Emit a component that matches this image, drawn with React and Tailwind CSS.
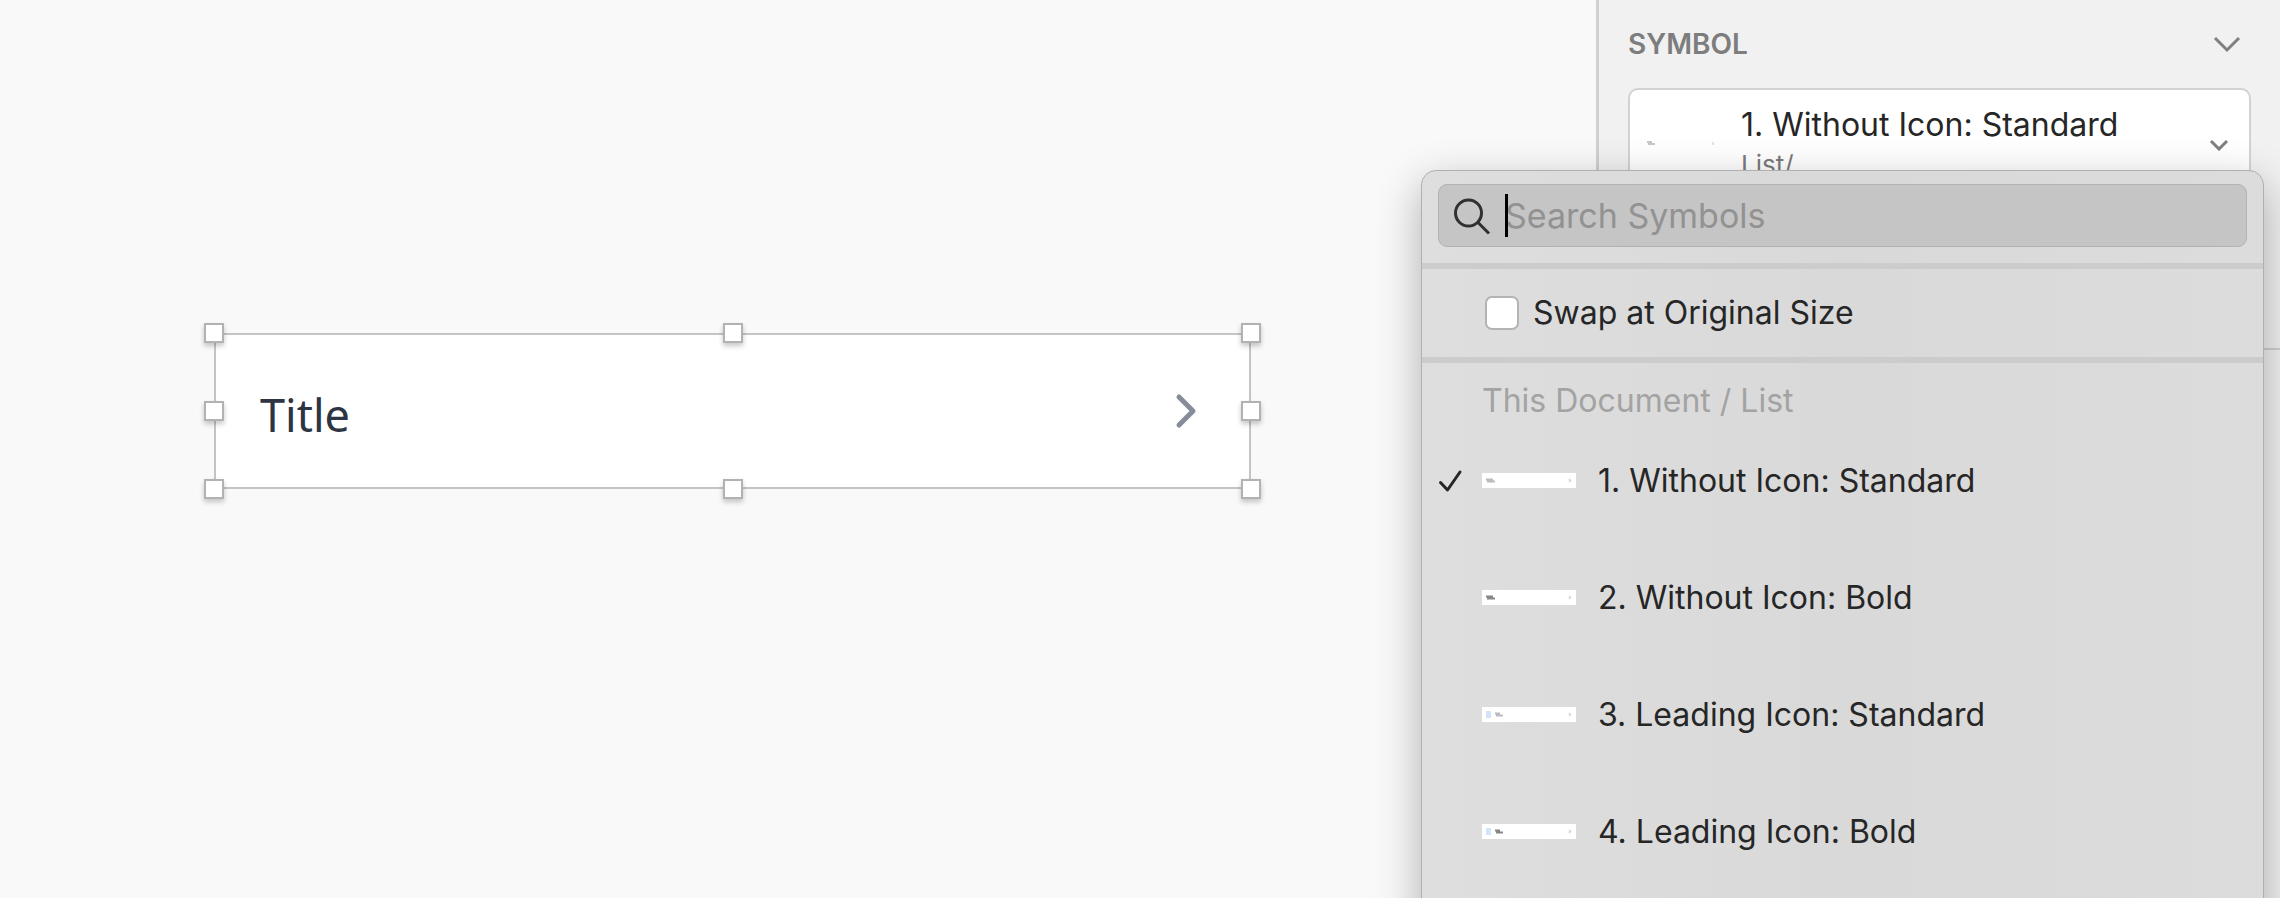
import React, { useState } from 'react';

const SYMBOLS = [
  { id: 1, name: '1. Without Icon: Standard', leading: false, bold: false },
  { id: 2, name: '2. Without Icon: Bold', leading: false, bold: true },
  { id: 3, name: '3. Leading Icon: Standard', leading: true, bold: false },
  { id: 4, name: '4. Leading Icon: Bold', leading: true, bold: true },
];

// Resize handles around the selected layer
const HANDLES = [
  'left-0 top-0',
  'left-1/2 top-0',
  'left-full top-0',
  'left-0 top-1/2',
  'left-full top-1/2',
  'left-0 top-full',
  'left-1/2 top-full',
  'left-full top-full',
];

const Thumbnail = ({ leading, bold }) => (
  <svg viewBox="0 0 94 15" className="w-[94px] h-[15px] shrink-0 bg-white" aria-hidden="true">
    {leading && <rect x="4" y="4" width="5" height="7" fill="#d3e3fa" />}
    <path
      d={leading ? 'M13 6.5h5M14 8.5h7' : 'M4 6.5h7M5 8.5h8'}
      stroke={bold ? '#85878c' : '#b9bbc0'}
      strokeWidth="2"
    />
    <path d="M87 6l1.5 1.5L87 9" fill="none" stroke="#d2d4d8" strokeWidth="1.5" />
  </svg>
);

const Canvas = () => (
  <main className="flex-1 min-w-0 bg-[#f9f9f9] pt-[333px] pl-[214px] pr-[345px]">
    <div className="relative flex items-center justify-between h-[156px] bg-white outline-2 -outline-offset-2 outline-[#c4c4c4] pl-[46px] pr-[54px]">
      <span className="font-['Noto_Sans'] text-[45px] leading-none text-[#2d3442] pt-[6px]">Title</span>
      <svg viewBox="0 0 22 36" className="w-[22px] h-9" fill="none" stroke="#868d98" strokeWidth="5" strokeLinecap="round" strokeLinejoin="round">
        <path d="M4 4l14 14L4 32" />
      </svg>
      {HANDLES.map((place) => (
        <span
          key={place}
          className={`absolute w-5 h-5 -translate-x-1/2 -translate-y-1/2 bg-white border-2 border-[#b2b2b2] shadow-[0_3px_5px_rgba(0,0,0,0.22)] ${place}`}
        />
      ))}
    </div>
  </main>
);

const Inspector = () => (
  <aside className="w-[30%] shrink-0 bg-[#f1f1f1] border-l-[3px] border-[#d0d0d0]">
    <section className="h-[350px] border-b-2 border-[#d0d0d0] px-[29px]">
      <div className="flex items-center justify-between h-[88px] pr-2">
        <h2 className="text-[28px] font-semibold text-[#7d7d7d]">SYMBOL</h2>
        <button type="button" aria-label="Collapse section" className="pr-[2px]">
          <svg viewBox="0 0 28 18" className="w-7 h-[18px]" fill="none" stroke="#7f7f7f" strokeWidth="3">
            <path d="M2 3l12 12L26 3" />
          </svg>
        </button>
      </div>
      <button
        type="button"
        aria-haspopup="listbox"
        className="flex items-center w-full h-[114px] text-left bg-white border-2 border-[#d2d2d2] rounded-[10px] pl-4 pr-[20px]"
      >
        <svg viewBox="0 0 70 12" className="w-[70px] h-3 shrink-0" aria-hidden="true">
          <path d="M1 3h5M2 5h7" stroke="#b5b5b8" strokeWidth="1.5" />
          <path d="M67 3v3" stroke="#c9c9cc" strokeWidth="1" />
        </svg>
        <span className="flex-1 pl-[25px]">
          <span className="block text-[32px] leading-10 text-[#262626]">1. Without Icon: Standard</span>
          <span className="block text-[26px] leading-10 text-[#7b7b7b]">List/</span>
        </span>
        <svg viewBox="0 0 20 12" className="w-5 h-3" fill="none" stroke="#7f7f7f" strokeWidth="3">
          <path d="M2 2l8 8 8-8" />
        </svg>
      </button>
    </section>
  </aside>
);

const SymbolPicker = () => {
  const [query, setQuery] = useState('');
  const [swap, setSwap] = useState(false);
  const [selected, setSelected] = useState(1);

  return (
    <div className="absolute top-[170px] right-4 -bottom-20 w-[843px] bg-[#dbdbdb] bg-linear-to-r from-[#dedede] via-[#d9d9d9] to-[#dcdcdc] border border-[#b0b0b0] rounded-[15px] shadow-[0_14px_44px_rgba(0,0,0,0.3)]">
      <div className="h-[92px] px-4 pt-[13px]">
        <label className="relative flex items-center h-[63px] bg-[#c5c5c5] border border-[#b2b2b2] rounded-[9px] pl-[14px]">
          <svg viewBox="0 0 40 40" className="w-10 h-10 shrink-0" fill="none" stroke="#303030" strokeWidth="3">
            <circle cx="15.500" cy="17" r="13" />
            <path d="M25 26.500L36 37.500" />
          </svg>
          {!query && <span className="absolute left-[66px] top-[9px] w-[3px] h-[43px] bg-black" />}
          <input
            type="text"
            aria-label="Search Symbols"
            placeholder="Search Symbols"
            value={query}
            onChange={(e) => setQuery(e.target.value)}
            className="flex-1 min-w-0 h-full ml-3 bg-transparent text-[34px] text-[#262626] placeholder:text-[#929292] outline-none"
          />
        </label>
      </div>

      <label className="flex items-center h-[100px] border-y-[6px] border-[#cccccc] pl-[63px] gap-[14px] text-[32px] text-[#262626]">
        <input
          type="checkbox"
          checked={swap}
          onChange={(e) => setSwap(e.target.checked)}
          className="appearance-none w-[34px] h-[34px] bg-white checked:bg-blue-500 border-2 border-[#b4b4b4] rounded-[7px]"
        />
        Swap at Original Size
      </label>

      <h3 className="h-[59px] pt-[14px] pl-[60px] text-[32px] leading-[48px] text-[#a3a3a3]">This Document / List</h3>

      <ul>
        {SYMBOLS.filter((s) => s.name.toLowerCase().includes(query.toLowerCase())).map((s) => (
          <li key={s.id}>
            <button
              type="button"
              onClick={() => setSelected(s.id)}
              className="flex items-center w-full h-[117px] pl-4 text-left text-[32px] text-[#262626]"
            >
              <span className="w-11 shrink-0">
                {selected === s.id && (
                  <svg viewBox="0 0 26 24" className="w-[26px] h-6" fill="none" stroke="#262626" strokeWidth="3" strokeLinecap="round" strokeLinejoin="round">
                    <path d="M2.500 13.500l7 7.500L22 3" />
                  </svg>
                )}
              </span>
              <Thumbnail leading={s.leading} bold={s.bold} />
              <span className="pl-[22px]">{s.name}</span>
            </button>
          </li>
        ))}
      </ul>
    </div>
  );
};

const App = () => (
  <div className="relative flex h-screen w-full overflow-hidden font-[Inter,sans-serif]">
    <Canvas />
    <Inspector />
    <SymbolPicker />
  </div>
);

export default App;
